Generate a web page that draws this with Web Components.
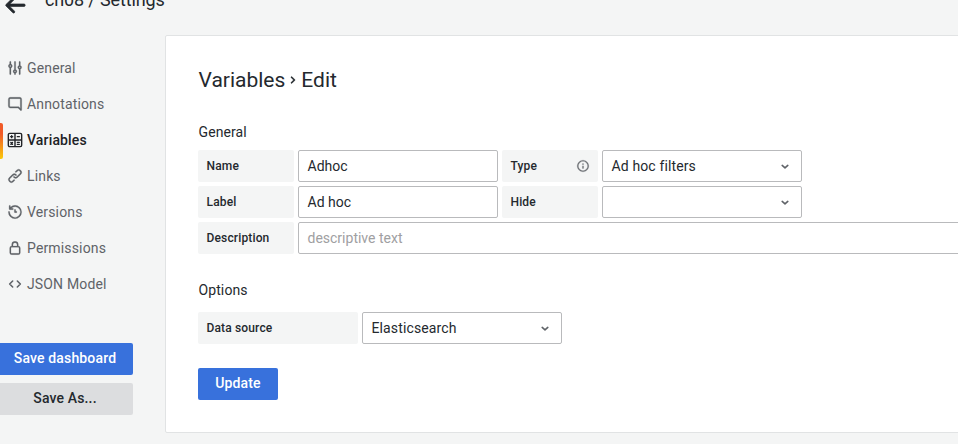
<!DOCTYPE html>
<html lang="en">
<head>
<meta charset="utf-8">
<title>Settings</title>
<style>
html, body { margin: 0; height: 100%; overflow: hidden; }
body { background: #f4f5f5; font: 400 14px/20px Roboto, sans-serif; letter-spacing: 0.15px; color: #24292e; }
</style>
</head>
<body>
<settings-page></settings-page>
<script>
const ICONS = {
  arrow: '<path d="M21 11H6.8l4.6-4.6a1.1 1.1 0 0 0-1.6-1.6L3 11.5a1 1 0 0 0 0 1.4l6.8 6.8a1.1 1.1 0 0 0 1.6-1.6L6.8 13.4H21A1.2 1.2 0 0 0 21 11Z" fill="currentColor" stroke="currentColor" stroke-width=".7"/>',
  sliders: '<path fill="currentColor" stroke="currentColor" stroke-width=".4" d="M20 8.18V3a1 1 0 0 0-2 0v5.18a3 3 0 0 0 0 5.64V21a1 1 0 0 0 2 0v-7.18a3 3 0 0 0 0-5.64ZM19 12a1 1 0 1 1 1-1 1 1 0 0 1-1 1Zm-6 2.18V3a1 1 0 0 0-2 0v11.18a3 3 0 0 0 0 5.64V21a1 1 0 0 0 2 0v-1.18a3 3 0 0 0 0-5.64ZM12 18a1 1 0 1 1 1-1 1 1 0 0 1-1 1ZM6 6.18V3a1 1 0 0 0-2 0v3.18a3 3 0 0 0 0 5.64V21a1 1 0 0 0 2 0v-9.18a3 3 0 0 0 0-5.64ZM5 10a1 1 0 1 1 1-1 1 1 0 0 1-1 1Z"/>',
  comment: '<path fill="currentColor" stroke="currentColor" stroke-width=".5" d="M19 2H5a3 3 0 0 0-3 3v10a3 3 0 0 0 3 3h11.59l3.7 3.71A1 1 0 0 0 21 22a.84.84 0 0 0 .38-.08A1 1 0 0 0 22 21V5a3 3 0 0 0-3-3Zm1 16.59-2.29-2.3A1 1 0 0 0 17 16H5a1 1 0 0 1-1-1V5a1 1 0 0 1 1-1h14a1 1 0 0 1 1 1Z"/>',
  calculator: '<path fill="none" stroke="currentColor" stroke-width="2.1" stroke-linecap="round" d="M4 2h16a2 2 0 0 1 2 2v16a2 2 0 0 1-2 2H4a2 2 0 0 1-2-2V4a2 2 0 0 1 2-2ZM12 2v20M2 12h20M5.5 7h3M7 5.5v3M15.5 7h3M5.8 15.8l2.4 2.4M8.2 15.8l-2.4 2.4M15.5 15.5h3M15.5 18.5h3"/>',
  link: '<path fill="currentColor" stroke="currentColor" stroke-width=".4" d="m10 17.55-1.77 1.72a2.47 2.47 0 0 1-3.5-3.5l4.54-4.55a2.46 2.46 0 0 1 3.39-.09l.12.1a1 1 0 0 0 1.4-1.43 2.75 2.75 0 0 0-.18-.21 4.46 4.46 0 0 0-6.09.22l-4.6 4.55a4.48 4.48 0 0 0 6.33 6.33L11.37 19A1 1 0 0 0 10 17.55ZM20.69 3.31a4.49 4.49 0 0 0-6.33 0L12.63 5A1 1 0 0 0 14 6.45l1.73-1.73a2.47 2.47 0 0 1 3.5 3.5l-4.54 4.55a2.46 2.46 0 0 1-3.39.09l-.12-.1a1 1 0 0 0-1.4 1.43 2.75 2.75 0 0 0 .23.21 4.47 4.47 0 0 0 6.09-.22l4.55-4.55a4.49 4.49 0 0 0 .04-6.32Z"/>',
  history: '<path fill="currentColor" stroke="currentColor" stroke-width=".4" d="M12 2a10 10 0 0 0-6.88 2.77V3a1 1 0 0 0-2 0v4.5a1 1 0 0 0 1 1h4.5a1 1 0 0 0 0-2h-2.4A8 8 0 1 1 4 12a1 1 0 0 0-2 0A10 10 0 1 0 12 2Zm0 6a1 1 0 0 0-1 1v3a1 1 0 0 0 1 1h2a1 1 0 0 0 0-2h-1V9a1 1 0 0 0-1-1Z"/>',
  lock: '<path fill="currentColor" stroke="currentColor" stroke-width=".3" d="M17 9V7A5 5 0 0 0 7 7v2a3 3 0 0 0-3 3v7a3 3 0 0 0 3 3h10a3 3 0 0 0 3-3v-7a3 3 0 0 0-3-3ZM9 7a3 3 0 0 1 6 0v2H9Zm9 12a1 1 0 0 1-1 1H7a1 1 0 0 1-1-1v-7a1 1 0 0 1 1-1h10a1 1 0 0 1 1 1Z"/>',
  code: '<path fill="none" stroke="currentColor" stroke-width="2.4" stroke-linecap="round" stroke-linejoin="round" d="M8.5 7.5 4 12l4.5 4.5M15.5 7.5 20 12l-4.5 4.5"/>',
  info: '<path fill="currentColor" stroke="currentColor" stroke-width=".4" d="M12 2a10 10 0 1 0 10 10A10 10 0 0 0 12 2Zm0 18a8 8 0 1 1 8-8 8 8 0 0 1-8 8Zm0-8.5a1 1 0 0 0-1 1v3a1 1 0 0 0 2 0v-3a1 1 0 0 0-1-1Zm0-4a1.25 1.25 0 1 0 1.25 1.25A1.25 1.25 0 0 0 12 7.5Z"/>',
  down: '<path fill="none" stroke="currentColor" stroke-width="2.4" stroke-linecap="round" stroke-linejoin="round" d="M7.8 11.2 12 14.8l4.2-3.6"/>',
  right: '<path fill="currentColor" stroke="currentColor" stroke-width=".4" d="M14.83 11.29 10.59 7.05a1 1 0 0 0-1.42 1.41L12.71 12l-3.54 3.54a1 1 0 0 0 1.42 1.41l4.24-4.24a1 1 0 0 0 0-1.42Z"/>'
};

function define(name, render) {
  customElements.define(name, class extends HTMLElement {
    connectedCallback() {
      if (!this.shadowRoot) this.attachShadow({ mode: 'open' }).innerHTML = render(this);
    }
  });
}

define('ui-icon', el => {
  const s = el.getAttribute('size') || 16;
  return `<style>:host{display:block;flex:none;width:${s}px;height:${s}px}svg{display:block}</style>
  <svg width="${s}" height="${s}" viewBox="0 0 24 24">${ICONS[el.getAttribute('name')]}</svg>`;
});

define('nav-item', el => `<style>
  :host{display:flex;align-items:center;height:36px;padding-left:7px;gap:4px;color:#5f6368;position:relative}
  :host([active]){color:#202226;font-weight:500}
  :host([active])::before{content:"";position:absolute;left:0;top:1px;width:3px;height:36px;border-radius:0 2px 2px 0;background:linear-gradient(#f05a28 30%,#fbca0a)}
  </style><ui-icon name="${el.getAttribute('icon')}"></ui-icon><slot></slot>`);

define('ui-button', () => `<style>
  :host{display:flex;align-items:center;justify-content:center;box-sizing:border-box;height:32px;padding:0 0 2px;border-radius:2px;background:#3871dc;color:#fff;font-weight:500}
  :host([secondary]){background:#dcdddf;color:#24292e}
  </style><slot></slot>`);

define('field-label', el => `<style>
  :host{display:flex;align-items:center;justify-content:space-between;box-sizing:border-box;width:96px;height:32px;padding:0 8px 0 8.5px;border-radius:2px;background:#f4f5f5;font-size:12px;font-weight:500;flex:none}
  :host([wide]){width:160px}
  ui-icon{color:#6b6e73}
  </style><slot></slot>${el.hasAttribute('info') ? '<ui-icon name="info" size="14"></ui-icon>' : ''}`);

define('text-field', () => `<style>
  :host{display:flex;align-items:center;box-sizing:border-box;width:200px;height:32px;padding:0 8.5px;border:1px solid #b9babc;border-radius:2px;background:#fff;flex:none;letter-spacing:0}
  :host([long]){width:800px}
  :host([placeholder]){color:#9fa0a2}
  </style><slot></slot>`);

define('select-field', () => `<style>
  :host{display:flex;align-items:center;justify-content:space-between;box-sizing:border-box;width:200px;height:32px;padding:0 8px 0 8.5px;border:1px solid #b9babc;border-radius:2px;background:#fff;flex:none;letter-spacing:.13px}
  ui-icon{color:#5f6368}
  </style><span><slot></slot></span><ui-icon name="down"></ui-icon>`);

define('field-row', () => `<style>:host{display:flex;gap:4px;margin-bottom:4px}</style><slot></slot>`);

define('settings-page', () => `<style>
  :host{display:flex;flex-direction:column;width:958px;height:444px;overflow:hidden}
  header{display:flex;align-items:center;height:36px;margin-top:-17px;padding-left:3px;gap:18px;font-size:18px;line-height:24px;box-sizing:border-box;flex:none;letter-spacing:-.14px}
  header ui-icon{margin-top:8px}
  header span{margin-top:-3px}
  main{display:flex;margin-top:16px;flex:none}
  aside{width:165px;padding-top:15px;flex:none}
  .actions{display:flex;flex-direction:column;gap:8px;width:136px;margin:41px 0 0 -3px}
  section{box-sizing:border-box;width:820px;height:398px;flex:none;padding:32px;background:#fff;border:1px solid #e1e3e4;border-radius:2px}
  h1{display:flex;align-items:center;margin:0 0 0 .5px;height:24px;font-size:21px;font-weight:400;letter-spacing:0}
  h2{margin:0 0 8px .5px;font-size:14px;line-height:20px;font-weight:400;letter-spacing:.1px}
  .general{margin-top:30px}
  .options{margin-top:26px;margin-bottom:12px}
  .update{width:80px;margin-top:24px}
  </style>
  <header><ui-icon name="arrow" size="24"></ui-icon><span>ch08 / Settings</span></header>
  <main>
    <aside>
      <nav>
        <nav-item icon="sliders">General</nav-item>
        <nav-item icon="comment">Annotations</nav-item>
        <nav-item icon="calculator" active>Variables</nav-item>
        <nav-item icon="link">Links</nav-item>
        <nav-item icon="history">Versions</nav-item>
        <nav-item icon="lock">Permissions</nav-item>
        <nav-item icon="code">JSON Model</nav-item>
      </nav>
      <div class="actions"><ui-button>Save dashboard</ui-button><ui-button secondary>Save As...</ui-button></div>
    </aside>
    <section>
      <h1>Variables<ui-icon name="right"></ui-icon>Edit</h1>
      <h2 class="general">General</h2>
      <field-row><field-label>Name</field-label><text-field>Adhoc</text-field><field-label info>Type</field-label><select-field>Ad hoc filters</select-field></field-row>
      <field-row><field-label>Label</field-label><text-field>Ad hoc</text-field><field-label>Hide</field-label><select-field></select-field></field-row>
      <field-row><field-label>Description</field-label><text-field long placeholder>descriptive text</text-field></field-row>
      <h2 class="options">Options</h2>
      <field-row><field-label wide>Data source</field-label><select-field>Elasticsearch</select-field></field-row>
      <ui-button class="update">Update</ui-button>
    </section>
  </main>`);
</script>
</body>
</html>
